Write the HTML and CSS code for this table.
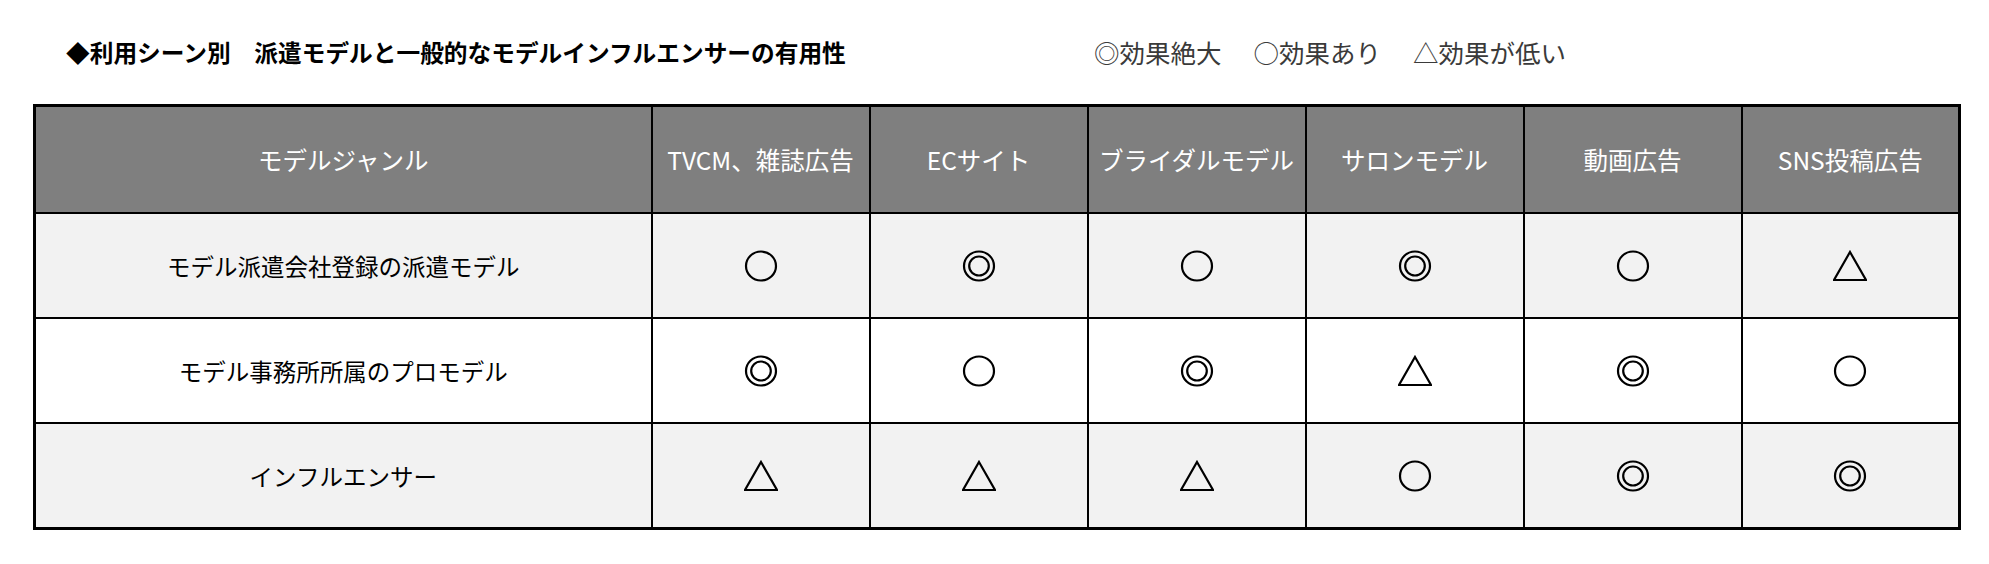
FILE: index.html
```html
<!DOCTYPE html>
<html lang="ja">
<head>
<meta charset="utf-8">
<title>利用シーン別 派遣モデルと一般的なモデルインフルエンサーの有用性</title>
<link rel="stylesheet" href="styles.css">
</head>
<body>
<svg class="defs" width="0" height="0" aria-hidden="true">
  <symbol id="s-circle" viewBox="0 0 34 34">
    <ellipse cx="17" cy="17" rx="15" ry="14.5" fill="none" stroke="#000" stroke-width="2.2"/>
  </symbol>
  <symbol id="s-double" viewBox="0 0 34 34">
    <ellipse cx="17" cy="17" rx="15" ry="14.5" fill="none" stroke="#000" stroke-width="2.2"/>
    <ellipse cx="17" cy="17" rx="9.8" ry="9.5" fill="none" stroke="#000" stroke-width="2.2"/>
  </symbol>
  <symbol id="s-tri" viewBox="0 0 34 34">
    <polygon points="17,3 33,31 1,31" fill="none" stroke="#000" stroke-width="2.2" stroke-linejoin="miter"/>
  </symbol>
</svg>
<main class="page">
  <div class="heading">
    <h1 class="title">◆利用シーン別　派遣モデルと一般的なモデルインフルエンサーの有用性</h1>
    <p class="legend">
      <span class="legend-item">◎効果絶大</span>
      <span class="legend-item">○効果あり</span>
      <span class="legend-item">△効果が低い</span>
    </p>
  </div>
  <table class="matrix">
    <colgroup>
      <col class="col-genre">
      <col class="col-scene"><col class="col-scene"><col class="col-scene">
      <col class="col-scene"><col class="col-scene"><col class="col-scene">
    </colgroup>
    <thead>
      <tr>
        <th>モデルジャンル</th>
        <th>TVCM、雑誌広告</th>
        <th>ECサイト</th>
        <th>ブライダルモデル</th>
        <th>サロンモデル</th>
        <th>動画広告</th>
        <th>SNS投稿広告</th>
      </tr>
    </thead>
    <tbody>
      <tr class="shade">
        <td class="genre">モデル派遣会社登録の派遣モデル</td>
        <td><svg class="mark" aria-label="○"><use href="#s-circle"/></svg></td>
        <td><svg class="mark" aria-label="◎"><use href="#s-double"/></svg></td>
        <td><svg class="mark" aria-label="○"><use href="#s-circle"/></svg></td>
        <td><svg class="mark" aria-label="◎"><use href="#s-double"/></svg></td>
        <td><svg class="mark" aria-label="○"><use href="#s-circle"/></svg></td>
        <td><svg class="mark" aria-label="△"><use href="#s-tri"/></svg></td>
      </tr>
      <tr>
        <td class="genre">モデル事務所所属のプロモデル</td>
        <td><svg class="mark" aria-label="◎"><use href="#s-double"/></svg></td>
        <td><svg class="mark" aria-label="○"><use href="#s-circle"/></svg></td>
        <td><svg class="mark" aria-label="◎"><use href="#s-double"/></svg></td>
        <td><svg class="mark" aria-label="△"><use href="#s-tri"/></svg></td>
        <td><svg class="mark" aria-label="◎"><use href="#s-double"/></svg></td>
        <td><svg class="mark" aria-label="○"><use href="#s-circle"/></svg></td>
      </tr>
      <tr class="shade">
        <td class="genre">インフルエンサー</td>
        <td><svg class="mark" aria-label="△"><use href="#s-tri"/></svg></td>
        <td><svg class="mark" aria-label="△"><use href="#s-tri"/></svg></td>
        <td><svg class="mark" aria-label="△"><use href="#s-tri"/></svg></td>
        <td><svg class="mark" aria-label="○"><use href="#s-circle"/></svg></td>
        <td><svg class="mark" aria-label="◎"><use href="#s-double"/></svg></td>
        <td><svg class="mark" aria-label="◎"><use href="#s-double"/></svg></td>
      </tr>
    </tbody>
  </table>
</main>
</body>
</html>
```

FILE: styles.css
```css
html, body {
  margin: 0;
  padding: 0;
  background: #fff;
}

body {
  font-family: "Noto Sans CJK JP", "Noto Sans", sans-serif;
  color: #000;
}

.defs {
  position: absolute;
  width: 0;
  height: 0;
  overflow: hidden;
}

.page {
  padding: 37px 0 0 33px;
}

.heading {
  display: grid;
  grid-template-columns: 1028px auto;
  align-items: center;
  padding-left: 33px;
  height: 30px;
  margin-bottom: 37px;
}

.title {
  margin: 0;
  font-size: 23.7px;
  font-weight: 700;
  line-height: 30px;
  white-space: nowrap;
}

.legend {
  margin: 0;
  display: flex;
  gap: 32px;
  font-size: 25.5px;
  line-height: 30px;
  color: #3a3a3a;
  font-weight: 400;
  white-space: nowrap;
}

.matrix {
  border-collapse: collapse;
  table-layout: fixed;
  width: 1925px;
  border: 3px solid #000;
}

.col-genre {
  width: 617px;
}

.col-scene {
  width: 218px;
}

.matrix th,
.matrix td {
  border: 2.5px solid #000;
  text-align: center;
  vertical-align: middle;
  padding: 0;
  white-space: nowrap;
}

.matrix th {
  background: #7f7f7f;
  color: #fff;
  font-size: 24.5px;
  font-weight: 400;
  height: 105px;
}

.matrix td {
  height: 103px;
  background: #fff;
  font-size: 23.5px;
}

.matrix tr.shade td {
  background: #f2f2f2;
}

.mark {
  display: block;
  width: 34px;
  height: 34px;
  margin: 0 auto;
}
```
